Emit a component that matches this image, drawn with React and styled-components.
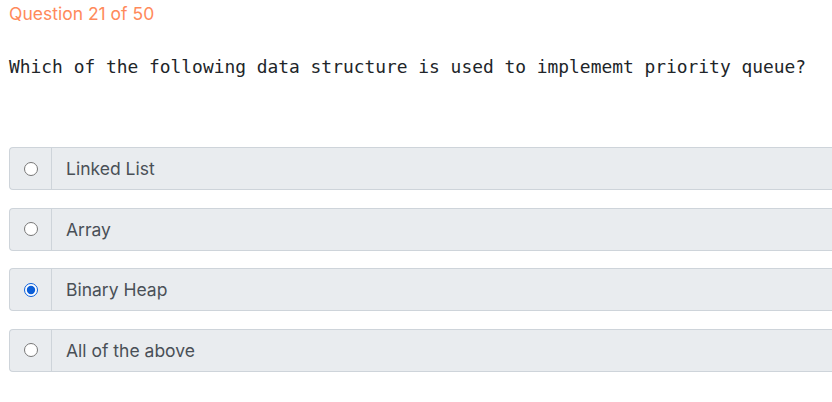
import React, { useState } from "react";
import styled, { createGlobalStyle } from "styled-components";

const GlobalStyle = createGlobalStyle`
	html, body {
		margin: 0;
		padding: 0;
		background: #fff;
		overflow: hidden;
	}
	body {
		font-family: Inter, "Noto Sans", sans-serif;
	}
`;

const Page = styled.div`
	padding: 2px 0 0 9px;
	width: 850px;
`;

const Counter = styled.div`
	color: #ff8a5b;
	font-size: 17.5px;
	line-height: 24px;
	letter-spacing: 0;
`;

const QuestionText = styled.pre`
	margin: 27px 0 0;
	font-family: "DejaVu Sans Mono", "Liberation Mono", monospace;
	font-size: 17.9px;
	line-height: 27px;
	color: #212529;
`;

const Options = styled.div`
	margin-top: 67px;
	display: flex;
	flex-direction: column;
	gap: 17.5px;
`;

const OptionRow = styled.label`
	display: flex;
	height: 43px;
	box-sizing: border-box;
	border: 1px solid #ced4da;
	border-right: none;
	border-radius: 4px 0 0 4px;
	background: #e9ecef;
	cursor: pointer;
`;

const RadioCell = styled.div`
	width: 41px;
	display: flex;
	align-items: center;
	justify-content: center;
	border-right: 1px solid #ced4da;
`;

const Radio = styled.input`
	margin: 0;
	width: 14px;
	height: 14px;
	accent-color: #0b5ed7;
`;

const OptionLabel = styled.span`
	display: flex;
	align-items: center;
	padding-left: 14px;
	font-size: 17.5px;
	color: #495057;
`;

const options = ["Linked List", "Array", "Binary Heap", "All of the above"];

export default function App() {
	const [picked, setPicked] = useState(2);
	return (
		<Page>
			<GlobalStyle />
			<Counter>Question 21 of 50</Counter>
			<QuestionText>Which of the following data structure is used to implememt priority queue?</QuestionText>
			<Options>
				{options.map((text, i) => (
					<OptionRow key={i}>
						<RadioCell>
							<Radio type="radio" name="answer" checked={picked === i} onChange={() => setPicked(i)} />
						</RadioCell>
						<OptionLabel>{text}</OptionLabel>
					</OptionRow>
				))}
			</Options>
		</Page>
	);
}
